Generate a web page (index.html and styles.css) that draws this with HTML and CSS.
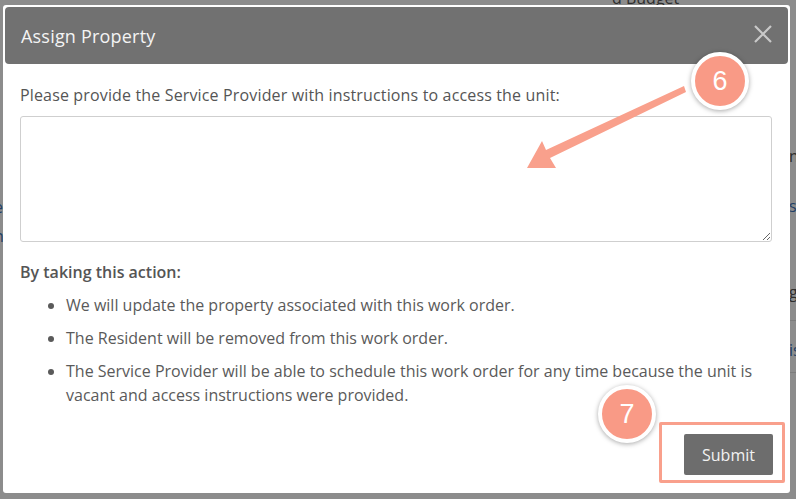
FILE: index.html
```html
<!DOCTYPE html>
<html>
<head>
<meta charset="utf-8">
<link rel="stylesheet" href="styles.css">
</head>
<body>
<div class="backdrop">
  <span class="bg-frag bg-top">d Budget</span>
  <span class="bg-frag bg-r1">n</span>
  <span class="bg-frag bg-r2 link">s</span>
  <span class="bg-frag bg-r3">g</span>
  <span class="bg-frag bg-r4 link">is</span>
  <span class="bg-frag bg-l1 link">t</span>
  <span class="bg-frag bg-l2 link">e</span>
  <span class="bg-frag bg-l3 link">n</span>
  <div class="bg-line bg-line1"></div>
  <div class="bg-line bg-line2"></div>
</div>
<div class="modal">
  <div class="modal-header">
    <h1 class="modal-title">Assign Property</h1>
    <svg class="close" width="18" height="18" viewBox="0 0 18 18" aria-label="Close">
      <path d="M1 1 L17 17 M17 1 L1 17" stroke="#c9c9c9" stroke-width="2.2" fill="none"/>
    </svg>
  </div>
  <div class="modal-body">
    <label class="prompt">Please provide the Service Provider with instructions to access the unit:</label>
    <div class="textarea-wrap">
      <textarea class="instructions"></textarea>
    </div>
    <p class="action-title">By taking this action:</p>
    <ul class="action-list">
      <li>We will update the property associated with this work order.</li>
      <li>The Resident will be removed from this work order.</li>
      <li>The Service Provider will be able to schedule this work order for any time because the unit is vacant and access instructions were provided.</li>
    </ul>
  </div>
  <div class="modal-footer">
    <div class="highlight">
      <button class="submit">Submit</button>
    </div>
  </div>
</div>
<svg class="arrow" width="796" height="499" viewBox="0 0 796 499">
  <polygon points="684,86 546,150 542,141 527,168 556,168 550,158 686,92" fill="#f9a08c"/>
</svg>
<div class="step step6">6</div>
<div class="step step7">7</div>
</body>
</html>
```

FILE: styles.css
```css
html, body {
  margin: 0;
  padding: 0;
}
body {
  width: 796px;
  height: 499px;
  background: #8c8c8c;
  font-family: "Open Sans", "Noto Sans", sans-serif;
  position: relative;
  overflow: hidden;
}
.backdrop {
  position: absolute;
  inset: 0;
}
.bg-frag {
  position: absolute;
  color: #2e2e2e;
  font-size: 16px;
  line-height: 20px;
}
.bg-frag.link { color: #1f3f66; }
.bg-top { left: 612px; top: -12px; }
.bg-r1 { left: 789px; top: 146px; }
.bg-r2 { left: 789px; top: 196px; }
.bg-r3 { left: 789px; top: 282px; }
.bg-r4 { left: 789px; top: 340px; }
.bg-l1 { left: -6px; top: 168px; }
.bg-l2 { left: -6px; top: 197px; }
.bg-l3 { left: -6px; top: 226px; }
.bg-line {
  position: absolute;
  left: 790px;
  width: 6px;
  height: 1px;
  background: #7c7c7c;
}
.bg-line1 { top: 320px; }
.bg-line2 { top: 372px; }

.modal {
  position: absolute;
  left: 3px;
  top: 5px;
  width: 787px;
  height: 488px;
  box-sizing: border-box;
  padding: 2px;
  background: #fff;
  border-radius: 3px;
  display: flex;
  flex-direction: column;
}
.modal-header {
  height: 57px;
  flex: none;
  background: #717171;
  border-radius: 4px;
  display: flex;
  align-items: center;
  justify-content: space-between;
  padding: 0 16px 0 16px;
}
.modal-title {
  margin: 0;
  font-size: 18px;
  font-weight: 400;
  color: #f4f4f4;
  letter-spacing: 0.2px;
}
.close {
  display: block;
  margin-top: -3px;
}
.modal-body {
  padding: 20px 15px 0 15px;
  color: #555;
}
.prompt {
  display: block;
  font-size: 16px;
  line-height: 22px;
  color: #555;
  letter-spacing: 0.15px;
}
.textarea-wrap {
  margin-top: 10px;
}
.instructions {
  display: block;
  width: 752px;
  height: 126px;
  box-sizing: border-box;
  border: 1px solid #cfcfcf;
  border-radius: 3px;
  resize: vertical;
  background: #fff;
}
.action-title {
  margin: 19px 0 0 0;
  font-size: 16px;
  font-weight: 600;
  line-height: 22px;
  color: #555;
}
.action-list {
  margin: 10px 0 0 0;
  padding-left: 46px;
  width: 700px;
  font-size: 16px;
  line-height: 24px;
  color: #5a5a5a;
}
.action-list li {
  margin-bottom: 9px;
}
.modal-footer {
  margin-top: auto;
  display: flex;
  justify-content: flex-end;
  padding: 0 3px 8px 0;
}
.highlight {
  border: 3px solid #f9a08c;
  border-radius: 2px;
  padding: 9px 9px 5px 22px;
}
.submit {
  width: 89px;
  height: 41px;
  border: none;
  border-radius: 2px;
  background: #6d6d6d;
  color: #f2f2f2;
  font-family: "Open Sans", "Noto Sans", sans-serif;
  font-size: 16px;
}
.arrow {
  position: absolute;
  left: 0;
  top: 0;
}
.step {
  position: absolute;
  width: 50px;
  height: 50px;
  border-radius: 50%;
  background: #f99a86;
  border: 4px solid #fff;
  box-shadow: 0 1px 5px rgba(0,0,0,0.35);
  color: #fff;
  font-family: "Liberation Sans", Arial, sans-serif;
  font-size: 27px;
  display: flex;
  align-items: center;
  justify-content: center;
}
.step6 { left: 691px; top: 52px; }
.step7 { left: 598px; top: 385px; }
```
